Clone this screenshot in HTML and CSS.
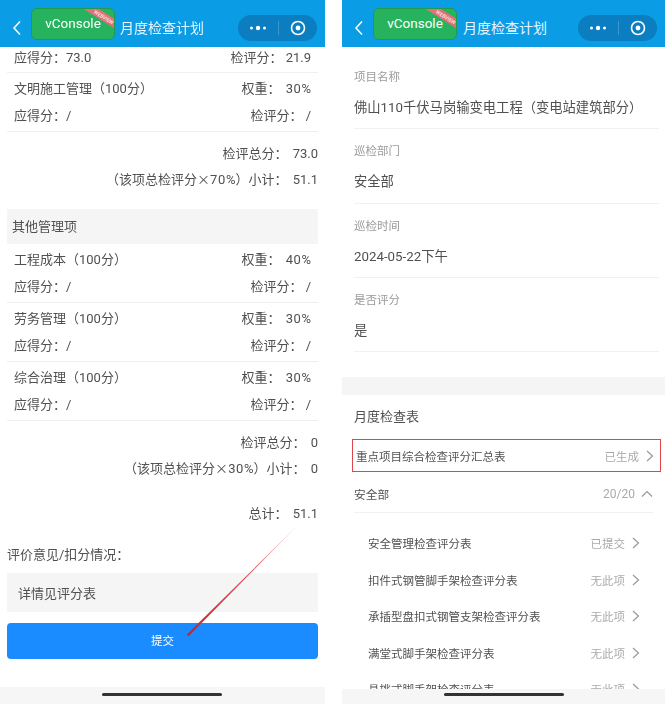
FILE: index.html
```html
<!DOCTYPE html>
<html lang="zh">
<head>
<meta charset="utf-8">
<title>月度检查计划</title>
<link rel="stylesheet" href="styles.css">
</head>
<body>
<div class="screens">
  <section class="phone phone-left">
    <header class="nav">
      <svg class="back" width="10" height="16" viewBox="0 0 10 16"><path d="M8 1.5 2 8l6 6.5" fill="none" stroke="#fff" stroke-width="1.5"/></svg>
      <div class="vconsole">vConsole<span class="ribbon"><span class="ribbon-text">WEBVIEW</span></span></div>
      <div class="nav-title">月度检查计划</div>
      <div class="capsule">
        <svg width="18" height="6" viewBox="0 0 18 6"><circle cx="2.5" cy="3" r="1.5" fill="#fff"/><circle cx="9" cy="3" r="2.2" fill="#fff"/><circle cx="15.5" cy="3" r="1.5" fill="#fff"/></svg>
        <span class="capsule-sep"></span>
        <svg width="16" height="16" viewBox="0 0 16 16"><circle cx="8" cy="8" r="6.5" fill="none" stroke="#fff" stroke-width="1.6"/><circle cx="8" cy="8" r="2.4" fill="#fff"/></svg>
      </div>
    </header>
    <main class="left-body">
      <div class="score-row score-top"><span>应得分：73.0</span><span>检评分： 21.9</span></div>
      <div class="item">
        <div class="score-row"><span>文明施工管理（100分）</span><span>权重： <span class="pct pct-weight">30%</span></span></div>
        <div class="score-row"><span>应得分：/</span><span>检评分： /</span></div>
      </div>
      <div class="sum"><div>检评总分： 73.0</div><div>（该项总检评分<span class="cjk">×</span><span class="pct">70%</span>）小计： 51.1</div></div>
      <div class="band">其他管理项</div>
      <div class="item">
        <div class="score-row"><span>工程成本（100分）</span><span>权重： <span class="pct pct-weight">40%</span></span></div>
        <div class="score-row"><span>应得分：/</span><span>检评分： /</span></div>
      </div>
      <div class="item">
        <div class="score-row"><span>劳务管理（100分）</span><span>权重： <span class="pct pct-weight">30%</span></span></div>
        <div class="score-row"><span>应得分：/</span><span>检评分： /</span></div>
      </div>
      <div class="item">
        <div class="score-row"><span>综合治理（100分）</span><span>权重： <span class="pct pct-weight">30%</span></span></div>
        <div class="score-row"><span>应得分：/</span><span>检评分： /</span></div>
      </div>
      <div class="sum sum-2"><div>检评总分： 0</div><div>（该项总检评分<span class="cjk">×</span><span class="pct">30%</span>）小计： 0</div></div>
      <div class="total">总计： 51.1</div>
      <div class="opinion-label">评价意见/扣分情况：</div>
      <div class="opinion">详情见评分表</div>
      <div class="submit">提交</div>
    </main>
    <div class="home-bar"><span class="home-pill"></span></div>
  </section>

  <section class="phone phone-right">
    <header class="nav">
      <svg class="back" width="10" height="16" viewBox="0 0 10 16"><path d="M8 1.5 2 8l6 6.5" fill="none" stroke="#fff" stroke-width="1.5"/></svg>
      <div class="vconsole">vConsole<span class="ribbon"><span class="ribbon-text">WEBVIEW</span></span></div>
      <div class="nav-title nav-title-right">月度检查计划</div>
      <div class="capsule">
        <svg width="18" height="6" viewBox="0 0 18 6"><circle cx="2.5" cy="3" r="1.5" fill="#fff"/><circle cx="9" cy="3" r="2.2" fill="#fff"/><circle cx="15.5" cy="3" r="1.5" fill="#fff"/></svg>
        <span class="capsule-sep"></span>
        <svg width="16" height="16" viewBox="0 0 16 16"><circle cx="8" cy="8" r="6.5" fill="none" stroke="#fff" stroke-width="1.6"/><circle cx="8" cy="8" r="2.4" fill="#fff"/></svg>
      </div>
    </header>
    <main class="right-body">
      <div class="field"><div class="field-label">项目名称</div><div class="field-value">佛山110千伏马岗输变电工程（变电站建筑部分）</div></div>
      <div class="field"><div class="field-label">巡检部门</div><div class="field-value">安全部</div></div>
      <div class="field"><div class="field-label">巡检时间</div><div class="field-value">2024-05-22下午</div></div>
      <div class="field"><div class="field-label">是否评分</div><div class="field-value">是</div></div>
      <div class="gap-band"></div>
      <div class="table-title">月度检查表</div>
      <div class="summary-row"><span>重点项目综合检查评分汇总表</span><span class="status">已生成<svg class="chev" width="8" height="12" viewBox="0 0 8 12"><path d="M1 1l5.5 5L1 11" fill="none" stroke="#999" stroke-width="1.2"/></svg></span></div>
      <div class="dept-row"><span>安全部</span><span class="status status-dept">20/20<svg class="chev-up" width="12" height="8" viewBox="0 0 12 8"><path d="M1 6.5 6 1.5l5 5" fill="none" stroke="#999" stroke-width="1.2"/></svg></span></div>
      <div class="sub-list">
        <div class="sub-row"><span>安全管理检查评分表</span><span class="status">已提交<svg class="chev" width="8" height="12" viewBox="0 0 8 12"><path d="M1 1l5.5 5L1 11" fill="none" stroke="#999" stroke-width="1.2"/></svg></span></div>
        <div class="sub-row"><span>扣件式钢管脚手架检查评分表</span><span class="status">无此项<svg class="chev" width="8" height="12" viewBox="0 0 8 12"><path d="M1 1l5.5 5L1 11" fill="none" stroke="#999" stroke-width="1.2"/></svg></span></div>
        <div class="sub-row"><span>承插型盘扣式钢管支架检查评分表</span><span class="status">无此项<svg class="chev" width="8" height="12" viewBox="0 0 8 12"><path d="M1 1l5.5 5L1 11" fill="none" stroke="#999" stroke-width="1.2"/></svg></span></div>
        <div class="sub-row"><span>满堂式脚手架检查评分表</span><span class="status">无此项<svg class="chev" width="8" height="12" viewBox="0 0 8 12"><path d="M1 1l5.5 5L1 11" fill="none" stroke="#999" stroke-width="1.2"/></svg></span></div>
        <div class="sub-row"><span>悬挑式脚手架检查评分表</span><span class="status">无此项<svg class="chev" width="8" height="12" viewBox="0 0 8 12"><path d="M1 1l5.5 5L1 11" fill="none" stroke="#999" stroke-width="1.2"/></svg></span></div>
      </div>
    </main>
    <div class="home-bar home-bar-right"><span class="home-pill"></span></div>
  </section>
</div>
<div class="redbox"></div>
<svg class="arrow" width="665" height="704" viewBox="0 0 665 704">
  <defs><linearGradient id="fade" x1="188" y1="635" x2="300" y2="523" gradientUnits="userSpaceOnUse"><stop offset="0" stop-color="#c8242a"/><stop offset="0.55" stop-color="#e0565a"/><stop offset="1" stop-color="#f9dcdc"/></linearGradient></defs>
  <polygon points="186.8,634.6 188.6,636.2 300,523" fill="url(#fade)"/>
</svg>
</body>
</html>
```
FILE: styles.css
```css
* { box-sizing: border-box; }
html, body { margin: 0; padding: 0; }
body {
  width: 665px; height: 704px; overflow: hidden; background: #fff; position: relative;
  font-family: "Roboto", "Noto Sans CJK SC", sans-serif; color: #505050; font-size: 13px;
}
.screens { display: flex; justify-content: space-between; height: 704px; filter: blur(0.4px); }
.phone { height: 704px; display: flex; flex-direction: column; overflow: hidden; position: relative; }
.phone-left { width: 325px; }
.phone-right { width: 323px; }

.nav { height: 47px; flex: none; background: #0a9de6; display: flex; align-items: center; padding-top: 9px; color: #e8f6ff; position: relative; }
.back { margin-left: 12px; flex: none; }
.vconsole {
  position: relative; overflow: hidden; width: 84px; height: 32px; margin-left: 9px; margin-top: -9px; flex: none;
  background: #27b35e; border: 1px solid #1f9a50; border-radius: 6px;
  color: #fff; font-size: 13.5px; text-align: center; line-height: 28px;
}
.ribbon { position: absolute; top: 4px; right: -16px; width: 52px; height: 8px; background: #e2707a; transform: rotate(32deg); display: flex; align-items: center; justify-content: center; }
.ribbon-text { font-size: 5px; line-height: 8px; color: #fff; }
.nav-title { font-size: 14px; margin-left: 5px; margin-top: -3px; white-space: nowrap; }
.nav-title-right { margin-left: 6px; }
.capsule {
  position: absolute; right: 8px; top: 15px; width: 79px; height: 26px; border-radius: 13px; background: #0a7ec0;
  display: flex; align-items: center; justify-content: space-between; padding: 0 11px;
}
.capsule-sep { width: 1px; height: 14px; background: rgba(255,255,255,.2); }

.left-body { flex: 1; padding: 0 7px; overflow: hidden; }
.score-row { display: flex; justify-content: space-between; padding: 0 7px; height: 27px; align-items: center; white-space: nowrap; }
.score-top { height: 26px; padding-bottom: 6px; border-bottom: 1px solid #efefef; }
.item { border-bottom: 1px solid #efefef; padding-top: 1px; height: 59px; }
.pct { letter-spacing: .6px; margin-right: -.6px; }
.pct-weight { margin-left: 2px; }
.cjk { font-family: "Noto Sans CJK SC", sans-serif; }
.sum { text-align: right; line-height: 25px; padding-top: 9px; height: 77px; word-spacing: 2px; white-space: nowrap; }
.band { background: #f5f5f5; height: 35px; line-height: 35px; padding-left: 5px; }
.sum-2 { height: 83px; }
.total { text-align: right; line-height: 20px; height: 41px; word-spacing: 2px; }
.opinion-label { font-size: 13px; height: 28px; line-height: 20px; }
.opinion { background: #f5f5f5; height: 39px; line-height: 41px; padding-left: 11px; margin-bottom: 11px; }
.submit { background: #1a8cff; height: 36px; border-radius: 4px; color: #fff; text-align: center; line-height: 36px; font-size: 11.5px; }
.home-bar { position: absolute; left: 0; right: 0; bottom: 0; height: 17px; background: #f6f6f6; }
.home-pill { position: absolute; left: 102px; top: 6px; width: 120px; height: 3px; background: #333; border-radius: 2px; }
.home-bar-right { height: 15px; }
.home-bar-right .home-pill { top: 4px; }

.right-body { flex: 1; overflow: hidden; padding-top: 8px; }
.field { margin: 0 6px 0 12px; height: 74.3px; border-bottom: 1px solid #f0f0f0; padding-top: 14px; }
.field-label { font-size: 11.5px; color: #9a9a9a; line-height: 16px; }
.field-value { font-size: 13.3px; line-height: 20px; margin-top: 13px; white-space: nowrap; }
.gap-band { height: 18px; background: #f5f5f5; margin-top: 25px; }
.table-title { padding-left: 12px; height: 44px; padding-top: 12px; line-height: 20px; }
.summary-row { height: 33px; display: flex; justify-content: space-between; align-items: center; padding: 0 11px 0 14px; font-size: 11.5px; }
.status { color: #aaa; display: flex; align-items: center; gap: 7px; font-size: 11.5px; }
.status-dept { font-size: 12px; gap: 6px; }
.dept-row { margin: 0 12px; height: 41px; padding-top: 3px; display: flex; justify-content: space-between; align-items: center; font-size: 11.7px; border-bottom: 1px solid #f0f0f0; }
.sub-list { padding: 12px 25px 0 26px; font-size: 11.5px; }
.sub-row { display: flex; justify-content: space-between; align-items: center; height: 36.5px; }

.redbox { position: absolute; left: 352px; top: 439px; width: 309px; height: 33px; border: 1px solid #e0454a; }
.arrow { position: absolute; left: 0; top: 0; pointer-events: none; }
```
